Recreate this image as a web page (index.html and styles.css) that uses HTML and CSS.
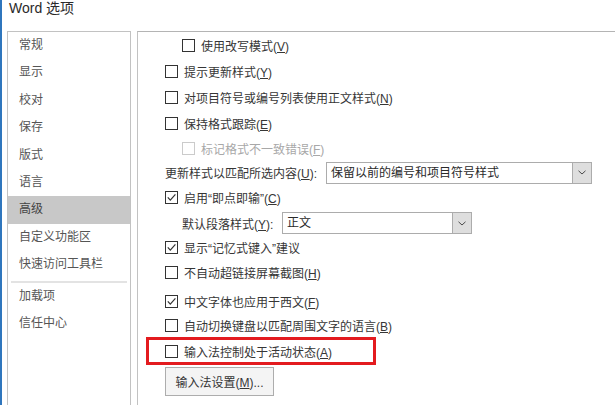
FILE: index.html
```html
<!DOCTYPE html>
<html lang="zh-CN">
<head>
<meta charset="utf-8">
<title>Word 选项</title>
<link rel="stylesheet" href="styles.css">
</head>
<body>
<div class="window">
  <div class="titlebar">Word 选项</div>
  <div class="main">
    <nav class="nav">
      <div class="nav-item">常规</div>
      <div class="nav-item">显示</div>
      <div class="nav-item">校对</div>
      <div class="nav-item">保存</div>
      <div class="nav-item">版式</div>
      <div class="nav-item">语言</div>
      <div class="nav-item active">高级</div>
      <div class="nav-item">自定义功能区</div>
      <div class="nav-item">快速访问工具栏</div>
      <div class="nav-sep"></div>
      <div class="nav-item">加载项</div>
      <div class="nav-item">信任中心</div>
    </nav>
    <section class="panel">
      <div class="row indent"><span class="cb"></span><span>使用改写模式(<u>V</u>)</span></div>
      <div class="row"><span class="cb"></span><span>提示更新样式(<u>Y</u>)</span></div>
      <div class="row"><span class="cb"></span><span>对项目符号或编号列表使用正文样式(<u>N</u>)</span></div>
      <div class="row"><span class="cb"></span><span>保持格式跟踪(<u>E</u>)</span></div>
      <div class="row indent h25 disabled"><span class="cb"></span><span>标记格式不一致错误(<u>F</u>)</span></div>
      <div class="row h23">
        <span class="label label-wide">更新样式以匹配所选内容(<u>U</u>):</span>
        <div class="select select-wide">
          <span class="select-value">保留以前的编号和项目符号样式</span>
          <span class="select-arrow"><svg width="8" height="5" viewBox="0 0 8 5"><path d="M0.5 0.8 L4 4 L7.5 0.8" fill="none" stroke="#4a4a4a" stroke-width="1"/></svg></span>
        </div>
      </div>
      <div class="row h27"><span class="cb"><svg width="11" height="11" viewBox="0 0 11 11"><path d="M1.8 5.4 L4.3 8.2 L9.4 2.4" fill="none" stroke="#333" stroke-width="1.2"/></svg></span><span>启用“即点即输”(<u>C</u>)</span></div>
      <div class="row indent h24">
        <span class="label label-narrow">默认段落样式(<u>Y</u>):</span>
        <div class="select select-narrow">
          <span class="select-value">正文</span>
          <span class="select-arrow"><svg width="8" height="5" viewBox="0 0 8 5"><path d="M0.5 0.8 L4 4 L7.5 0.8" fill="none" stroke="#4a4a4a" stroke-width="1"/></svg></span>
        </div>
      </div>
      <div class="row h25"><span class="cb"><svg width="11" height="11" viewBox="0 0 11 11"><path d="M1.8 5.4 L4.3 8.2 L9.4 2.4" fill="none" stroke="#333" stroke-width="1.2"/></svg></span><span>显示“记忆式键入”建议</span></div>
      <div class="row h25"><span class="cb"></span><span>不自动超链接屏幕截图(<u>H</u>)</span></div>
      <div class="row gap-top"><span class="cb"><svg width="11" height="11" viewBox="0 0 11 11"><path d="M1.8 5.4 L4.3 8.2 L9.4 2.4" fill="none" stroke="#333" stroke-width="1.2"/></svg></span><span>中文字体也应用于西文(<u>F</u>)</span></div>
      <div class="row h23"><span class="cb"></span><span>自动切换键盘以匹配周围文字的语言(<u>B</u>)</span></div>
      <div class="row highlight"><span class="cb"></span><span>输入法控制处于活动状态(<u>A</u>)</span></div>
      <button class="btn">输入法设置(<u>M</u>)...</button>
    </section>
  </div>
</div>
</body>
</html>
```
FILE: styles.css
```css
html, body {
  margin: 0;
  height: 100%;
  overflow: hidden;
  background: #ffffff;
}

body {
  font-family: "Liberation Sans", "Noto Sans CJK SC", sans-serif;
  font-size: 12px;
  color: #363636;
}

.window {
  height: 405px;
  border-left: 2px solid #2f76bd;
  box-sizing: border-box;
  display: flex;
  flex-direction: column;
}

.titlebar {
  height: 32px;
  padding: 0 0 0 7px;
  font-size: 14px;
  line-height: 16px;
  color: #2a2a2a;
  flex: none;
}

.main {
  flex: 1;
  display: flex;
  gap: 6px;
  padding-left: 5px;
  min-height: 0;
}

.nav {
  width: 124px;
  flex: none;
  box-sizing: border-box;
  border: 1px solid #c2c2c2;
  border-bottom: none;
  margin-top: -1px;
}

.nav-item {
  height: 27.4px;
  line-height: 27.4px;
  padding-left: 11px;
  color: #555555;
  white-space: nowrap;
}

.nav-item.active {
  background: #c8c8c8;
  color: #444444;
}

.nav-sep {
  height: 2px;
  background: #e3e3e3;
  margin: 2px 3px 0 3px;
}

.panel {
  flex: 1;
  border-top: 1px solid #b4b4b4;
  border-left: 1px solid #c2c2c2;
  margin-top: -1px;
  display: flex;
  flex-direction: column;
}

.row {
  display: flex;
  align-items: center;
  height: 26px;
  padding-left: 27px;
  white-space: nowrap;
  flex: none;
  box-sizing: border-box;
}

.row.indent { padding-left: 44px; }
.row.h23 { height: 23px; }
.row.h24 { height: 24px; }
.row.h25 { height: 25px; }
.row.h27 { height: 27px; }
.row.gap-top { margin-top: 3px; }

.cb {
  width: 13px;
  height: 13px;
  box-sizing: border-box;
  border: 1px solid #333333;
  background: #ffffff;
  margin-right: 6px;
  flex: none;
  display: flex;
  align-items: center;
  justify-content: center;
}

.cb svg { display: block; }

.disabled { color: #a8a8a8; }
.disabled .cb { border-color: #cbcbcb; }

.label-wide { width: 161px; }
.label-narrow { width: 100px; }

.select {
  display: flex;
  height: 22px;
  box-sizing: border-box;
  border: 1px solid #acacac;
  background: #ffffff;
}

.select-wide { width: 266px; }
.select-narrow { width: 190px; }

.select-value {
  flex: 1;
  padding-left: 4px;
  line-height: 20px;
  color: #2a2a2a;
}

.select-arrow {
  width: 18px;
  flex: none;
  background: #dedede;
  border-left: 1px solid #acacac;
  display: flex;
  align-items: center;
  justify-content: center;
}

.row.highlight {
  height: 28px;
  width: 230px;
  margin-left: 8px;
  padding-left: 16px;
  border: 3px solid #e31b1f;
}

.btn {
  margin: 2px 0 0 27px;
  width: 109px;
  height: 29px;
  box-sizing: border-box;
  border: 1px solid #adadad;
  background: #f4f4f4;
  font: inherit;
  color: #363636;
  padding: 0;
  text-align: center;
  align-self: flex-start;
  flex: none;
}
```
